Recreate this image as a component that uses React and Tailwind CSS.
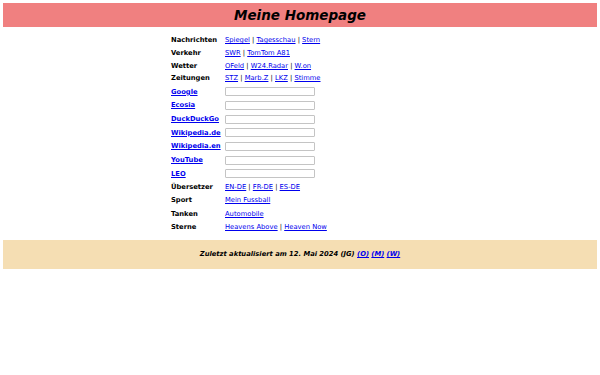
const links = "text-[#0000ee] underline";

function Links({ items }) {
  return (
    <span>
      {items.map((item, i) => (
        <span key={item}>
          {i > 0 && " | "}
          <a href="#" className={links}>
            {item}
          </a>
        </span>
      ))}
    </span>
  );
}

function TextRow({ label, items, tall }) {
  return (
    <div
      className={`grid grid-cols-[54px_1fr] items-center ${
        tall ? "h-[13.2px]" : "h-[12.8px]"
      }`}
    >
      <span className="font-bold">{label}</span>
      <Links items={items} />
    </div>
  );
}

function SearchRow({ label }) {
  return (
    <div className="grid h-[13.7px] grid-cols-[54px_1fr] items-center">
      <a href="#" className={`font-bold ${links}`}>
        {label}
      </a>
      <input
        type="text"
        className="h-[9px] w-[90px] rounded-[1px] border border-[#c4c4c4] bg-white outline-none"
      />
    </div>
  );
}

export default function App() {
  return (
    <div className="min-h-[375px] bg-white p-[3px] font-['DejaVu_Sans',sans-serif] text-[6.75px] text-black">
      <div className="flex h-[24px] items-center justify-center bg-[#f08080]">
        <h1 className="text-[13.5px] font-bold italic">Meine Homepage</h1>
      </div>

      <div className="mx-auto mt-[6.6px] w-[258px]">
        <TextRow label="Nachrichten" items={["Spiegel", "Tagesschau", "Stern"]} />
        <TextRow label="Verkehr" items={["SWR", "TomTom A81"]} />
        <TextRow label="Wetter" items={["OFeld", "W24.Radar", "W.on"]} />
        <TextRow label="Zeitungen" items={["STZ", "Marb.Z", "LKZ", "Stimme"]} />
        <SearchRow label="Google" />
        <SearchRow label="Ecosia" />
        <SearchRow label="DuckDuckGo" />
        <SearchRow label="Wikipedia.de" />
        <SearchRow label="Wikipedia.en" />
        <SearchRow label="YouTube" />
        <SearchRow label="LEO" />
        <TextRow tall label="Übersetzer" items={["EN-DE", "FR-DE", "ES-DE"]} />
        <TextRow tall label="Sport" items={["Mein Fussball"]} />
        <TextRow tall label="Tanken" items={["Automobile"]} />
        <TextRow tall label="Sterne" items={["Heavens Above", "Heaven Now"]} />
      </div>

      <div className="mt-[6.5px] flex h-[29px] items-center justify-center bg-[#f5deb3]">
        <p className="font-bold italic">
          Zuletzt aktualisiert am 12. Mai 2024 (JG){" "}
          <a href="#" className={links}>(O)</a>{" "}
          <a href="#" className={links}>(M)</a>{" "}
          <a href="#" className={links}>(W)</a>
        </p>
      </div>
    </div>
  );
}
